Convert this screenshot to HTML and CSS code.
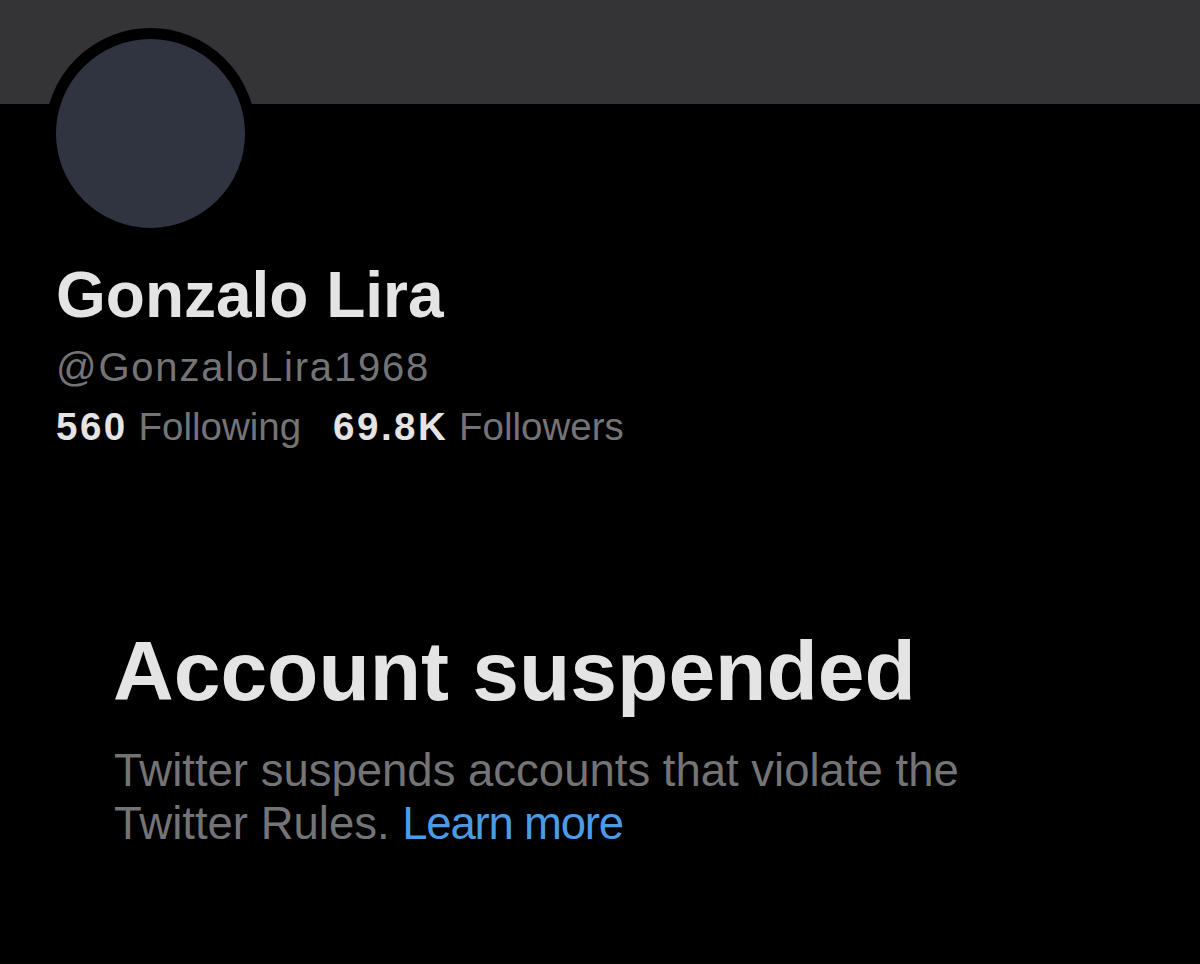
FILE: index.html
```html
<!DOCTYPE html>
<html lang="en">
<head>
<meta charset="utf-8">
<title>Gonzalo Lira (@GonzaloLira1968)</title>
<link rel="stylesheet" href="styles.css">
</head>
<body>
<div class="banner"></div>
<main class="profile">
  <div class="avatar"></div>
  <h1 class="name">Gonzalo Lira</h1>
  <div class="handle">@GonzaloLira1968</div>
  <div class="stats">
    <span class="stat"><b class="num">560</b> Following</span>
    <span class="stat"><b class="num">69.8K</b> Followers</span>
  </div>
</main>
<section class="suspended">
  <h2 class="title">Account suspended</h2>
  <p class="desc">Twitter suspends accounts that violate the Twitter Rules. <a class="link" href="#">Learn more</a></p>
</section>
</body>
</html>
```

FILE: styles.css
```css
html, body {
  margin: 0;
  padding: 0;
  background: #000;
  font-family: "Liberation Sans", Arial, sans-serif;
  color: #e4e4e4;
}
body {
  height: 964px;
  overflow: hidden;
}
.banner {
  height: 104px;
  background: #343437;
}
.profile {
  padding-left: 56px;
  display: flex;
  flex-direction: column;
  align-items: flex-start;
}
.avatar {
  width: 189px;
  height: 189px;
  margin-top: -76px;
  margin-left: -11px;
  border: 11px solid #000;
  border-radius: 50%;
  background: #2f3440;
}
.name {
  margin: 24px 0 0 0;
  font-size: 64px;
  line-height: 64px;
  font-weight: 700;
  color: #e4e4e4;
}
.handle {
  margin-top: 20px;
  font-size: 40px;
  line-height: 40px;
  letter-spacing: 1.8px;
  color: #747477;
}
.stats {
  margin-top: 21px;
  display: flex;
  gap: 32px;
  font-size: 38.5px;
  line-height: 38px;
  color: #747477;
}
.num {
  font-weight: 700;
  color: #e4e4e4;
  letter-spacing: 2.5px;
}
.suspended {
  margin-top: 183px;
  padding-left: 114px;
  width: 880px;
}
.title {
  margin: 0 0 0 -1px;
  font-size: 84px;
  line-height: 84px;
  font-weight: 700;
  color: #e4e4e4;
}
.desc {
  margin: 31px 0 0 0;
  font-size: 45.5px;
  line-height: 53px;
  color: #747477;
}
.link {
  color: #4a9ce8;
  text-decoration: none;
  letter-spacing: -1.2px;
}
```
